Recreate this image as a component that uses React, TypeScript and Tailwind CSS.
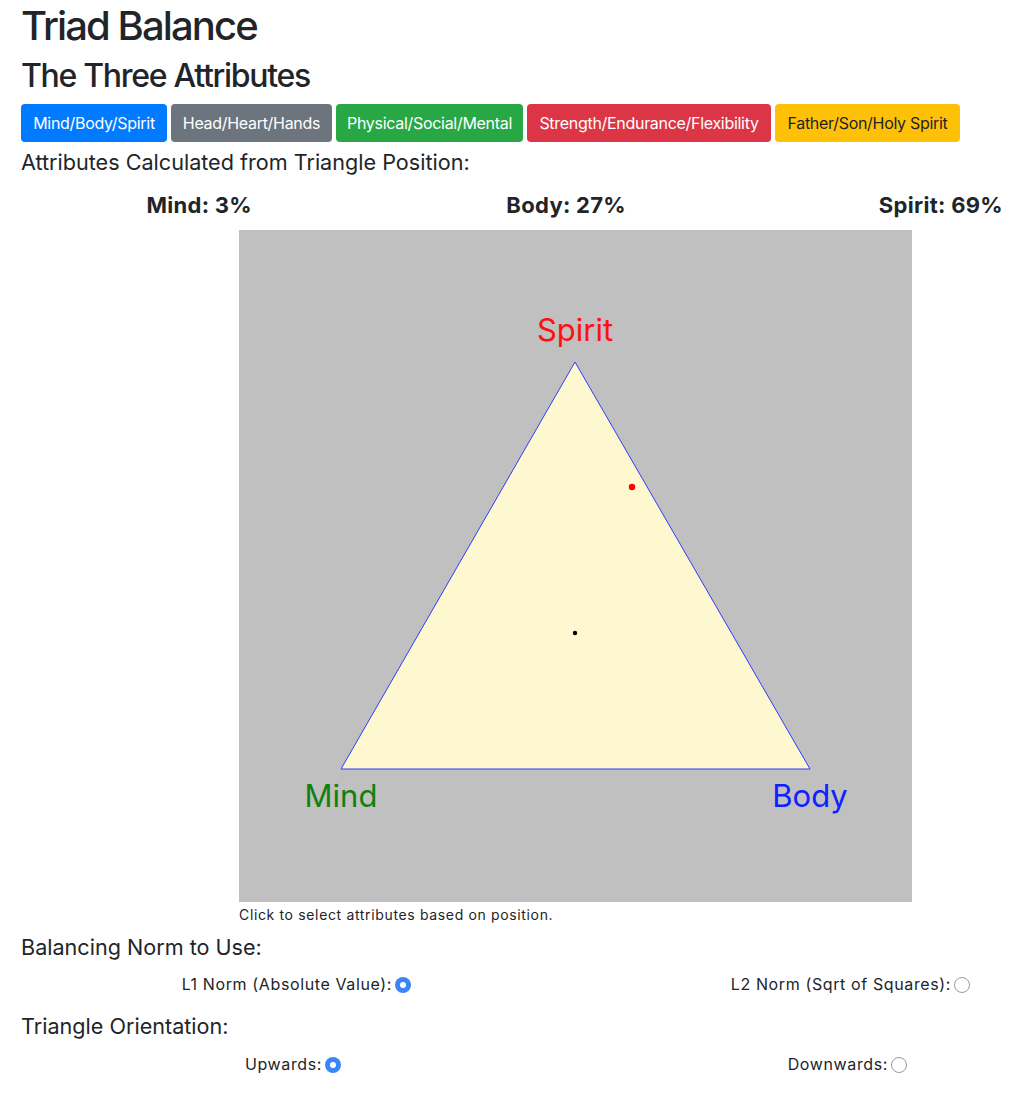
import React from "react";

function Radio({ checked }: { checked: boolean }) {
  return checked ? (
    <span className="inline-flex w-[16px] h-[16px] rounded-full bg-[#3b86f7] items-center justify-center ml-[3px] mt-[2px]">
      <span className="w-[6px] h-[6px] rounded-full bg-white" />
    </span>
  ) : (
    <span className="inline-block w-[16px] h-[16px] rounded-full border border-[#9a9a9a] bg-white ml-[3px] mt-[2px]" />
  );
}

export default function App() {
  const btns = [
    { t: "Mind/Body/Spirit", c: "bg-[#007bff] text-white", w: "w-[146px]" },
    { t: "Head/Heart/Hands", c: "bg-[#6c757d] text-white", w: "w-[161px]" },
    { t: "Physical/Social/Mental", c: "bg-[#28a745] text-white", w: "w-[187px]" },
    { t: "Strength/Endurance/Flexibility", c: "bg-[#dc3545] text-white", w: "w-[244px]" },
    { t: "Father/Son/Holy Spirit", c: "bg-[#ffc107] text-[#212529]", w: "w-[185px]" },
  ];
  return (
    <div className="min-h-[1095px] bg-white text-[#212529] font-['Inter',sans-serif] pl-[21px] pr-[18px]">
      <h1 className="text-[40px] leading-[48px] tracking-[-1.9px] font-medium m-0 pt-[2px]">Triad Balance</h1>
      <h2 className="text-[32px] leading-[38px] tracking-[-1.3px] font-medium mt-[7px]">The Three Attributes</h2>
      <div className="flex gap-[4px] mt-[9px]">
        {btns.map((b) => (
          <div
            key={b.t}
            className={`${b.c} ${b.w} h-[38px] rounded-[4px] flex items-center justify-center text-[16px] tracking-[-0.3px] whitespace-nowrap`}
          >
            {b.t}
          </div>
        ))}
      </div>
      <div className="text-[21.6px] leading-[24px] mt-[8px]">Attributes Calculated from Triangle Position:</div>
      <div className="flex text-[22px] leading-[26px] font-bold tracking-[0.3px] mt-[18px]">
        <div className="w-[231px] text-right">Mind: 3%</div>
        <div className="w-[374px] text-right">Body: 27%</div>
        <div className="w-[377px] text-right">Spirit: 69%</div>
      </div>
      <div className="ml-[218px] mt-[12px] w-[673px] h-[672px] bg-[#c0c0c0]">
        <svg width="673" height="672" viewBox="0 0 673 672">
          <polygon points="336,132 102,539 571,539" fill="#fdf8d0" stroke="#2f3bff" strokeWidth="1" />
          <circle cx="393" cy="257" r="3.2" fill="#ff0000" />
          <circle cx="336" cy="403" r="2.2" fill="#000" />
          <text x="336" y="111" textAnchor="middle" fontSize="31" fill="#ff1010" fontFamily="Inter, sans-serif">Spirit</text>
          <text x="102" y="577" textAnchor="middle" fontSize="31" fill="#108010" fontFamily="Inter, sans-serif">Mind</text>
          <text x="571" y="577" textAnchor="middle" fontSize="31" fill="#1020ff" fontFamily="Inter, sans-serif">Body</text>
        </svg>
      </div>
      <div className="ml-[218px] text-[14px] leading-[20px] tracking-[0.65px] mt-[3px]">Click to select attributes based on position.</div>
      <div className="text-[21.6px] leading-[24px] mt-[10px]">Balancing Norm to Use:</div>
      <div className="flex text-[16px] leading-[24px] tracking-[0.62px] mt-[13px]">
        <div className="w-[390px] flex justify-end items-center">
          L1 Norm (Absolute Value):<Radio checked />
        </div>
        <div className="w-[559px] flex justify-end items-center">
          L2 Norm (Sqrt of Squares):<Radio checked={false} />
        </div>
      </div>
      <div className="text-[21.6px] leading-[24px] mt-[18px]">Triangle Orientation:</div>
      <div className="flex text-[16px] leading-[24px] tracking-[0.62px] mt-[14px]">
        <div className="w-[320px] flex justify-end items-center">
          Upwards:<Radio checked />
        </div>
        <div className="w-[566px] flex justify-end items-center">
          Downwards:<Radio checked={false} />
        </div>
      </div>
    </div>
  );
}
